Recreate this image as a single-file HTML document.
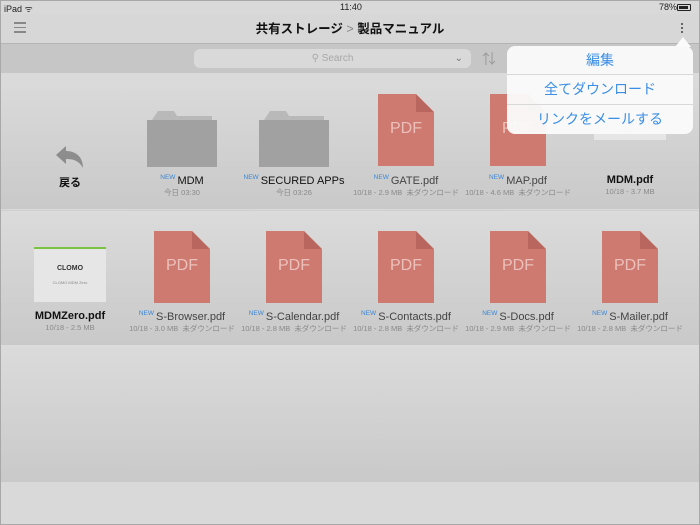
<!DOCTYPE html>
<html><head><meta charset="utf-8"><style>
*{margin:0;padding:0;box-sizing:border-box}
body{width:700px;height:525px;overflow:hidden;position:relative;background:#d9d9d9;font-family:"Liberation Sans","Noto Sans CJK JP",sans-serif;}
.frame{position:absolute;inset:0;border:1px solid #a8a8a8;pointer-events:none;z-index:20}
.status{position:absolute;top:0;left:0;width:700px;height:14px;font-size:9px;color:#222}
.nav{position:absolute;top:14px;left:0;width:700px;height:30px;background:#d7d7d7;border-bottom:1px solid #b4b4b4}
.title{position:absolute;left:0;width:700px;text-align:center;font-size:12.5px;font-weight:bold;color:#111}
.toolbar{position:absolute;top:44px;left:0;width:700px;height:29px;background:#c6c6c6}
.search{position:absolute;left:194px;top:5px;width:277px;height:19px;background:#d9d9d9;border-radius:6px;font-size:10px;color:#a8a8a8;text-align:center;line-height:19px}
.shelf{position:absolute;left:0;width:700px;background:linear-gradient(#dbdbdb,#c9c9c9)}
.item{position:absolute;width:112px;text-align:center}
.name{position:absolute;left:-20px;width:152px;text-align:center;font-size:11px;color:#111;white-space:nowrap}
.new{color:#3a86d6;font-size:6.5px;vertical-align:5px;margin-right:2px}
.sub{position:absolute;left:-30px;width:172px;text-align:center;font-size:7.5px;color:#8a8a8a;white-space:nowrap}
.pdf{position:absolute;left:28px;width:56px;height:72px;background:#cf7a70;clip-path:polygon(0 0,38px 0,56px 18px,56px 72px,0 72px)}
.pdf:after{content:"";position:absolute;left:38px;top:0;width:18px;height:18px;background:#b8665e;clip-path:polygon(0 0,100% 100%,0 100%)}
.pdf span{position:absolute;left:0;top:26px;width:56px;text-align:center;color:#ecc0ba;font-size:16px}
.folder{position:absolute;left:35px;width:70px;height:58px}
.folder .tab{position:absolute;left:5px;top:0;width:60px;height:9px;background:#b9b9b9;clip-path:polygon(0 100%,6px 0,22px 0,25px 5px,60px 5px,60px 100%)}
.folder .body{position:absolute;left:0;top:9px;width:70px;height:47px;background:#a1a1a1}
.thumb{position:absolute;background:#e6e6e6;font-size:4px;color:#888}
.pop{position:absolute;left:507px;top:46px;width:186px;height:88px;background:rgba(250,250,250,0.96);border-radius:8px;z-index:10}
.pop div{height:29.3px;line-height:29px;text-align:center;color:#3a8ee6;font-size:14px;border-bottom:1px solid #d8d8d8}
.pop div:last-child{border:none}
.arrow{position:absolute;left:675px;top:37px;width:0;height:0;border-left:8px solid transparent;border-right:8px solid transparent;border-bottom:10px solid #fafafa;z-index:10}
</style></head><body>
<div class="frame"></div>
<div class="nav"></div>
<div class="status">
<span style="position:absolute;left:4px;top:2px">iPad ᯤ</span>
<span style="position:absolute;left:340px;top:2px">11:40</span>
<span style="position:absolute;left:659px;top:2px">78%</span>
<span style="position:absolute;left:677px;top:4px;width:14px;height:7px;border:1px solid #222;border-radius:1px"><span style="position:absolute;left:1px;top:1px;width:9px;height:3px;background:#222"></span></span>
</div>
<div style="position:absolute;left:14px;top:22px;width:12px">
<div style="height:1.5px;background:#888;margin-bottom:3px"></div><div style="height:1.5px;background:#888;margin-bottom:3px"></div><div style="height:1.5px;background:#888"></div></div>
<div class="title" style="top:18px">共有ストレージ <span style="color:#888;font-weight:normal">&gt;</span> 製品マニュアル</div>
<div style="position:absolute;left:681px;top:23px;width:3px">
<div style="width:2px;height:2px;background:#666;margin-bottom:2px"></div><div style="width:2px;height:2px;background:#666;margin-bottom:2px"></div><div style="width:2px;height:2px;background:#666"></div></div>
<div class="toolbar"><div class="search">⚲ Search<span style="position:absolute;right:8px;color:#777">⌄</span></div>
<div style="position:absolute;left:482px;top:5px;font-size:14px;color:#999">⇅</div></div>

<div class="shelf" style="top:74px;height:135px"></div>
<div class="shelf" style="top:210px;height:135px;border-top:1px solid #cfcfcf"></div>
<div class="shelf" style="top:345px;height:137px"></div>

<!-- row1 -->
<div class="item" style="left:14px;top:74px">
<svg style="position:absolute;left:42px;top:72px" width="28" height="24" viewBox="0 0 28 24"><path d="M0 9 L10 0 L10 5 C20 5 27 11 27 22 C23 15 18 13 10 13 L10 18 Z" fill="#8d8d8d"/></svg>
<div class="name" style="top:100px"><b>戻る</b></div></div>

<div class="item" style="left:126px;top:74px"><div class="folder" style="left:21px;top:37px"><div class="tab"></div><div class="body"></div></div>
<div class="name" style="top:100px"><span class="new">NEW</span>MDM</div><div class="sub" style="top:113px">今日 03:30</div></div>
<div class="item" style="left:238px;top:74px"><div class="folder" style="left:21px;top:37px"><div class="tab"></div><div class="body"></div></div>
<div class="name" style="top:100px"><span class="new">NEW</span>SECURED APPs</div><div class="sub" style="top:113px">今日 03:26</div></div>
<div class="item" style="left:350px;top:74px"><div class="pdf" style="top:20px"><span>PDF</span></div>
<div class="name" style="top:100px;color:#444"><span class="new">NEW</span>GATE.pdf</div><div class="sub" style="top:113px">10/18 - 2.9 MB &nbsp;未ダウンロード</div></div>
<div class="item" style="left:462px;top:74px"><div class="pdf" style="top:20px"><span>PDF</span></div>
<div class="name" style="top:100px;color:#444"><span class="new">NEW</span>MAP.pdf</div><div class="sub" style="top:113px">10/18 - 4.6 MB &nbsp;未ダウンロード</div></div>
<div class="item" style="left:574px;top:74px"><div class="thumb" style="left:20px;top:54px;width:72px;height:12px;text-align:center">CLOMO MDM</div>
<div class="name" style="top:100px"><b>MDM.pdf</b></div><div class="sub" style="top:113px">10/18 - 3.7 MB</div></div>

<!-- row2 -->
<div class="item" style="left:14px;top:210px"><div class="thumb" style="left:20px;top:37px;width:72px;height:55px;border-top:2px solid #7cc242;text-align:center">
<div style="margin-top:16px;font-size:7px;font-weight:bold;color:#333">CLOMO</div><div style="margin-top:8px">CLOMO MDM Zero</div></div>
<div class="name" style="top:100px"><b>MDMZero.pdf</b></div><div class="sub" style="top:113px">10/18 - 2.5 MB</div></div>
<div class="item" style="left:126px;top:210px"><div class="pdf" style="top:21px"><span>PDF</span></div>
<div class="name" style="top:100px;color:#444"><span class="new">NEW</span>S-Browser.pdf</div><div class="sub" style="top:113px">10/18 - 3.0 MB &nbsp;未ダウンロード</div></div>
<div class="item" style="left:238px;top:210px"><div class="pdf" style="top:21px"><span>PDF</span></div>
<div class="name" style="top:100px;color:#444"><span class="new">NEW</span>S-Calendar.pdf</div><div class="sub" style="top:113px">10/18 - 2.8 MB &nbsp;未ダウンロード</div></div>
<div class="item" style="left:350px;top:210px"><div class="pdf" style="top:21px"><span>PDF</span></div>
<div class="name" style="top:100px;color:#444"><span class="new">NEW</span>S-Contacts.pdf</div><div class="sub" style="top:113px">10/18 - 2.8 MB &nbsp;未ダウンロード</div></div>
<div class="item" style="left:462px;top:210px"><div class="pdf" style="top:21px"><span>PDF</span></div>
<div class="name" style="top:100px;color:#444"><span class="new">NEW</span>S-Docs.pdf</div><div class="sub" style="top:113px">10/18 - 2.9 MB &nbsp;未ダウンロード</div></div>
<div class="item" style="left:574px;top:210px"><div class="pdf" style="top:21px"><span>PDF</span></div>
<div class="name" style="top:100px;color:#444"><span class="new">NEW</span>S-Mailer.pdf</div><div class="sub" style="top:113px">10/18 - 2.8 MB &nbsp;未ダウンロード</div></div>

<div class="arrow"></div>
<div class="pop"><div>編集</div><div>全てダウンロード</div><div>リンクをメールする</div></div>
</body></html>
